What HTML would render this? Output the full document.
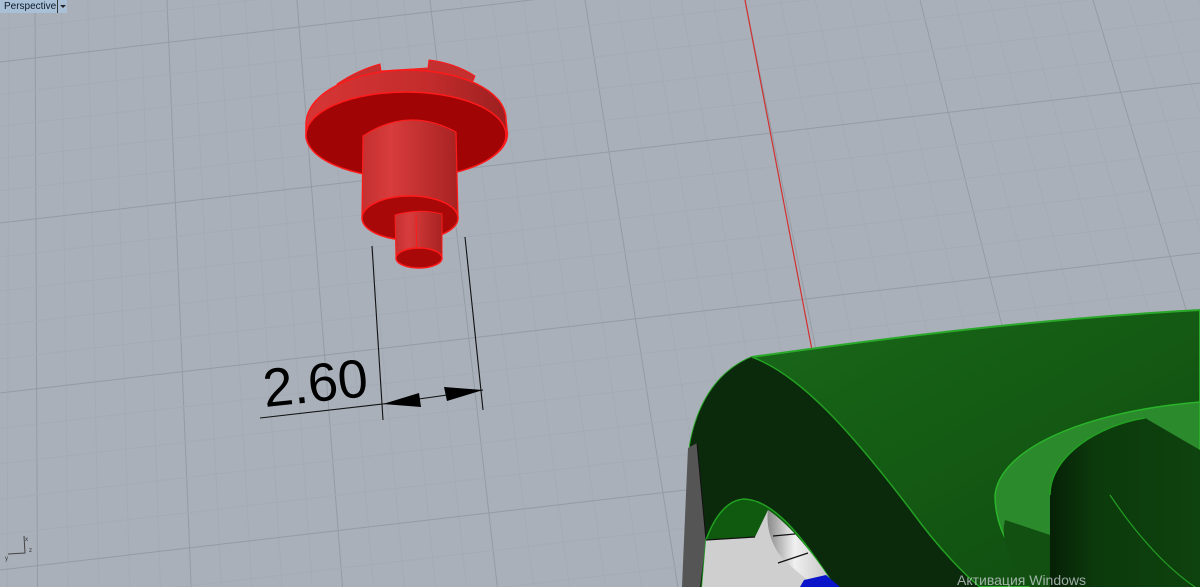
<!DOCTYPE html>
<html><head><meta charset="utf-8">
<style>
html,body{margin:0;padding:0;width:1200px;height:587px;overflow:hidden;background:#a9b0b9;position:relative;}
svg{position:absolute;left:0;top:0;}
.lbl{position:absolute;left:0;top:0;height:13px;background:#aac0d6;font:10px "Liberation Sans",sans-serif;color:#0c1a2a;line-height:13px;padding:0 0 0 4px;width:53px;white-space:nowrap;overflow:hidden;}
.arr{position:absolute;left:57px;top:0;width:9px;height:13px;background:#aac0d6;border-left:1px solid #333;}
.arr:after{content:"";position:absolute;left:2px;top:5px;border-left:3px solid transparent;border-right:3px solid transparent;border-top:3px solid #222;}
.win{position:absolute;left:957px;top:572px;height:15px;overflow:hidden;font:14px/17px "Liberation Sans",sans-serif;color:rgba(210,215,220,0.75);white-space:nowrap;}
</style></head><body>
<svg id="s" width="1200" height="587" viewBox="0 0 1200 587">
<defs>
<linearGradient id="cyl" x1="0" x2="1"><stop offset="0" stop-color="#c43030"/><stop offset="0.3" stop-color="#d83c3c"/><stop offset="1" stop-color="#a82222"/></linearGradient>
<linearGradient id="band" x1="0" x2="1"><stop offset="0" stop-color="#d63535"/><stop offset="0.6" stop-color="#c42c2c"/><stop offset="1" stop-color="#9c2020"/></linearGradient>
<linearGradient id="gtop" x1="0" y1="0" x2="1" y2="1"><stop offset="0" stop-color="#1a6a1a"/><stop offset="0.5" stop-color="#145a14"/><stop offset="1" stop-color="#0f4a0f"/></linearGradient>
<linearGradient id="wht" x1="0" x2="1"><stop offset="0" stop-color="#8a8a8a"/><stop offset="0.4" stop-color="#f0f0f0"/><stop offset="1" stop-color="#bdbdbd"/></linearGradient>
<linearGradient id="wall" x1="0" x2="1"><stop offset="0" stop-color="#062006"/><stop offset="0.3" stop-color="#0c3a0c"/><stop offset="1" stop-color="#0e420e"/></linearGradient>
</defs>
<g id="grid"></g>
<line x1="745" y1="0" x2="812" y2="350" stroke="#d03030" stroke-width="1.2"/>
<!-- red part -->
<path d="M337,84 Q358,70 380,64 L381,71 L428,68 L429,60 Q455,63 475,76 L470,88 L340,90Z" fill="#c43030" stroke="#ff1a1a" stroke-width="1"/>
<path d="M306,125 C306,90 360,70 406,70 C460,70 506,90 506,120 L507,130 A100,43 0 0 1 306,138Z" fill="url(#band)" stroke="#ff1a1a" stroke-width="1.5"/>
<ellipse cx="406" cy="135" rx="100" ry="43" fill="#a00404" stroke="#ff1a1a" stroke-width="1.5"/>
<path d="M363,136 Q408,106 456,132 L458,218 A48,22 0 0 1 362,218Z" fill="url(#cyl)" stroke="#ff1a1a" stroke-width="1.2"/>
<ellipse cx="410" cy="218" rx="48" ry="22" fill="#a80808" stroke="#ff1a1a" stroke-width="1.5"/>
<path d="M395,215 Q419,208 442,214 L442,258 A23,10 0 0 1 396,258Z" fill="url(#cyl)" stroke="#ff1a1a" stroke-width="1"/>
<line x1="416" y1="215" x2="417" y2="266" stroke="#ff1a1a" stroke-width="1"/>
<ellipse cx="419" cy="258" rx="23" ry="10" fill="#a80808" stroke="#ff1a1a" stroke-width="1.5"/>
<!-- dimension -->
<g stroke="#111" stroke-width="1.1" fill="none">
<line x1="372" y1="246" x2="383" y2="420"/>
<line x1="465" y1="237" x2="483" y2="410"/>
<line x1="383" y1="404" x2="483" y2="390"/>
<line x1="260" y1="418" x2="383" y2="404"/>
</g>
<polygon points="383,404 419,393 421,407" fill="#000"/>
<polygon points="483,390 444,387 447,401" fill="#000"/>
<text x="265" y="407" font-family="Liberation Sans,sans-serif" font-size="54" fill="#000" transform="rotate(-6 265 407)">2.60</text>
<!-- green object -->
<path d="M684,587 L690,445 C698,400 720,370 752,357 C900,336 1050,318 1200,310 L1200,587Z" fill="url(#gtop)" stroke="#2aa82a" stroke-width="2"/>
<path d="M690,445 C698,400 720,370 752,357 C800,375 850,430 913,513 C940,550 965,575 980,587 L684,587Z" fill="#0b290b"/>
<path d="M752,357 C800,375 850,430 913,513 C940,550 965,575 980,587" fill="none" stroke="#22a022" stroke-width="1.5"/>
<polygon points="688,448 697,443 706,540 700,587 682,587" fill="#555"/>
<line x1="697" y1="443" x2="706" y2="540" stroke="#111"/>
<path d="M706,540 C715,515 728,500 744,499 C775,500 805,540 835,587 L702,587Z" fill="#0f5a0f" stroke="#22a022" stroke-width="1.5"/>
<path d="M706,540 L755,537 L768,510 C790,525 815,555 833,587 L702,587Z" fill="#cfcfcf"/>
<path d="M768,510 C765,530 775,555 790,565 C800,575 810,580 812,587 L835,587 C815,555 790,525 768,510Z" fill="url(#wht)"/>
<path d="M706,540 L755,537 M773,536 L795,534 M778,563 L808,553" stroke="#111" stroke-width="1.2"/>
<polygon points="800,587 804,580 826,575 840,587" fill="#0a14c8"/>
<path d="M995,495 C1000,450 1080,412 1200,402 L1200,587 L1050,587 C1015,565 995,530 995,495Z" fill="#2b8a2b" stroke="#2ab42a" stroke-width="1.5"/>
<path d="M1030,587 C1010,560 1000,540 1005,520 L1050,535 L1052,587Z" fill="#115011"/>
<path d="M1050,495 C1050,455 1100,425 1145,418 L1200,450 L1200,587 L1050,587Z" fill="url(#wall)"/>
<path d="M1050,495 C1050,455 1100,425 1145,418" fill="none" stroke="#22a022" stroke-width="1.5"/>
<path d="M1110,495 C1140,540 1170,570 1195,587" fill="none" stroke="#22a022" stroke-width="1.2"/>
<!-- axis -->
<g stroke="#444" stroke-width="1" fill="none"><path d="M8,554 L25,553 L24,536"/></g>
<text x="25" y="541" font-family="Liberation Sans,sans-serif" font-size="6" fill="#333">x</text>
<text x="29" y="552" font-family="Liberation Sans,sans-serif" font-size="6" fill="#333">z</text>
<text x="5" y="560" font-family="Liberation Sans,sans-serif" font-size="6" fill="#333">y</text>
</svg>
<div class="lbl">Perspective</div><div class="arr"></div>
<div class="win">Активация Windows</div>
<script>
var g=document.getElementById('grid'),h='';
function L(x1,y1,x2,y2,c){h+='<line x1="'+x1+'" y1="'+y1+'" x2="'+x2+'" y2="'+y2+'" stroke="'+c+'" stroke-width="1"/>';}
var vm=[-95,35,167,297,430,585,745,920,1093,1270];
for(var i=0;i<vm.length-1;i++){for(var k=0;k<5;k++){var x=vm[i]+(vm[i+1]-vm[i])*k/5;var s=(x-20)*0.00028;L(x,0,x+s*587,587,k==0?'#949ba3':'#a4abb4');}}
var hm=[-100,62,223,393,570,760];
for(var i=0;i<hm.length-1;i++){for(var k=0;k<5;k++){var y=hm[i]+(hm[i+1]-hm[i])*k/5;L(0,y,1200,y-140,k==0?'#949ba3':'#a4abb4');}}
g.innerHTML=h;
</script>
</body></html>
